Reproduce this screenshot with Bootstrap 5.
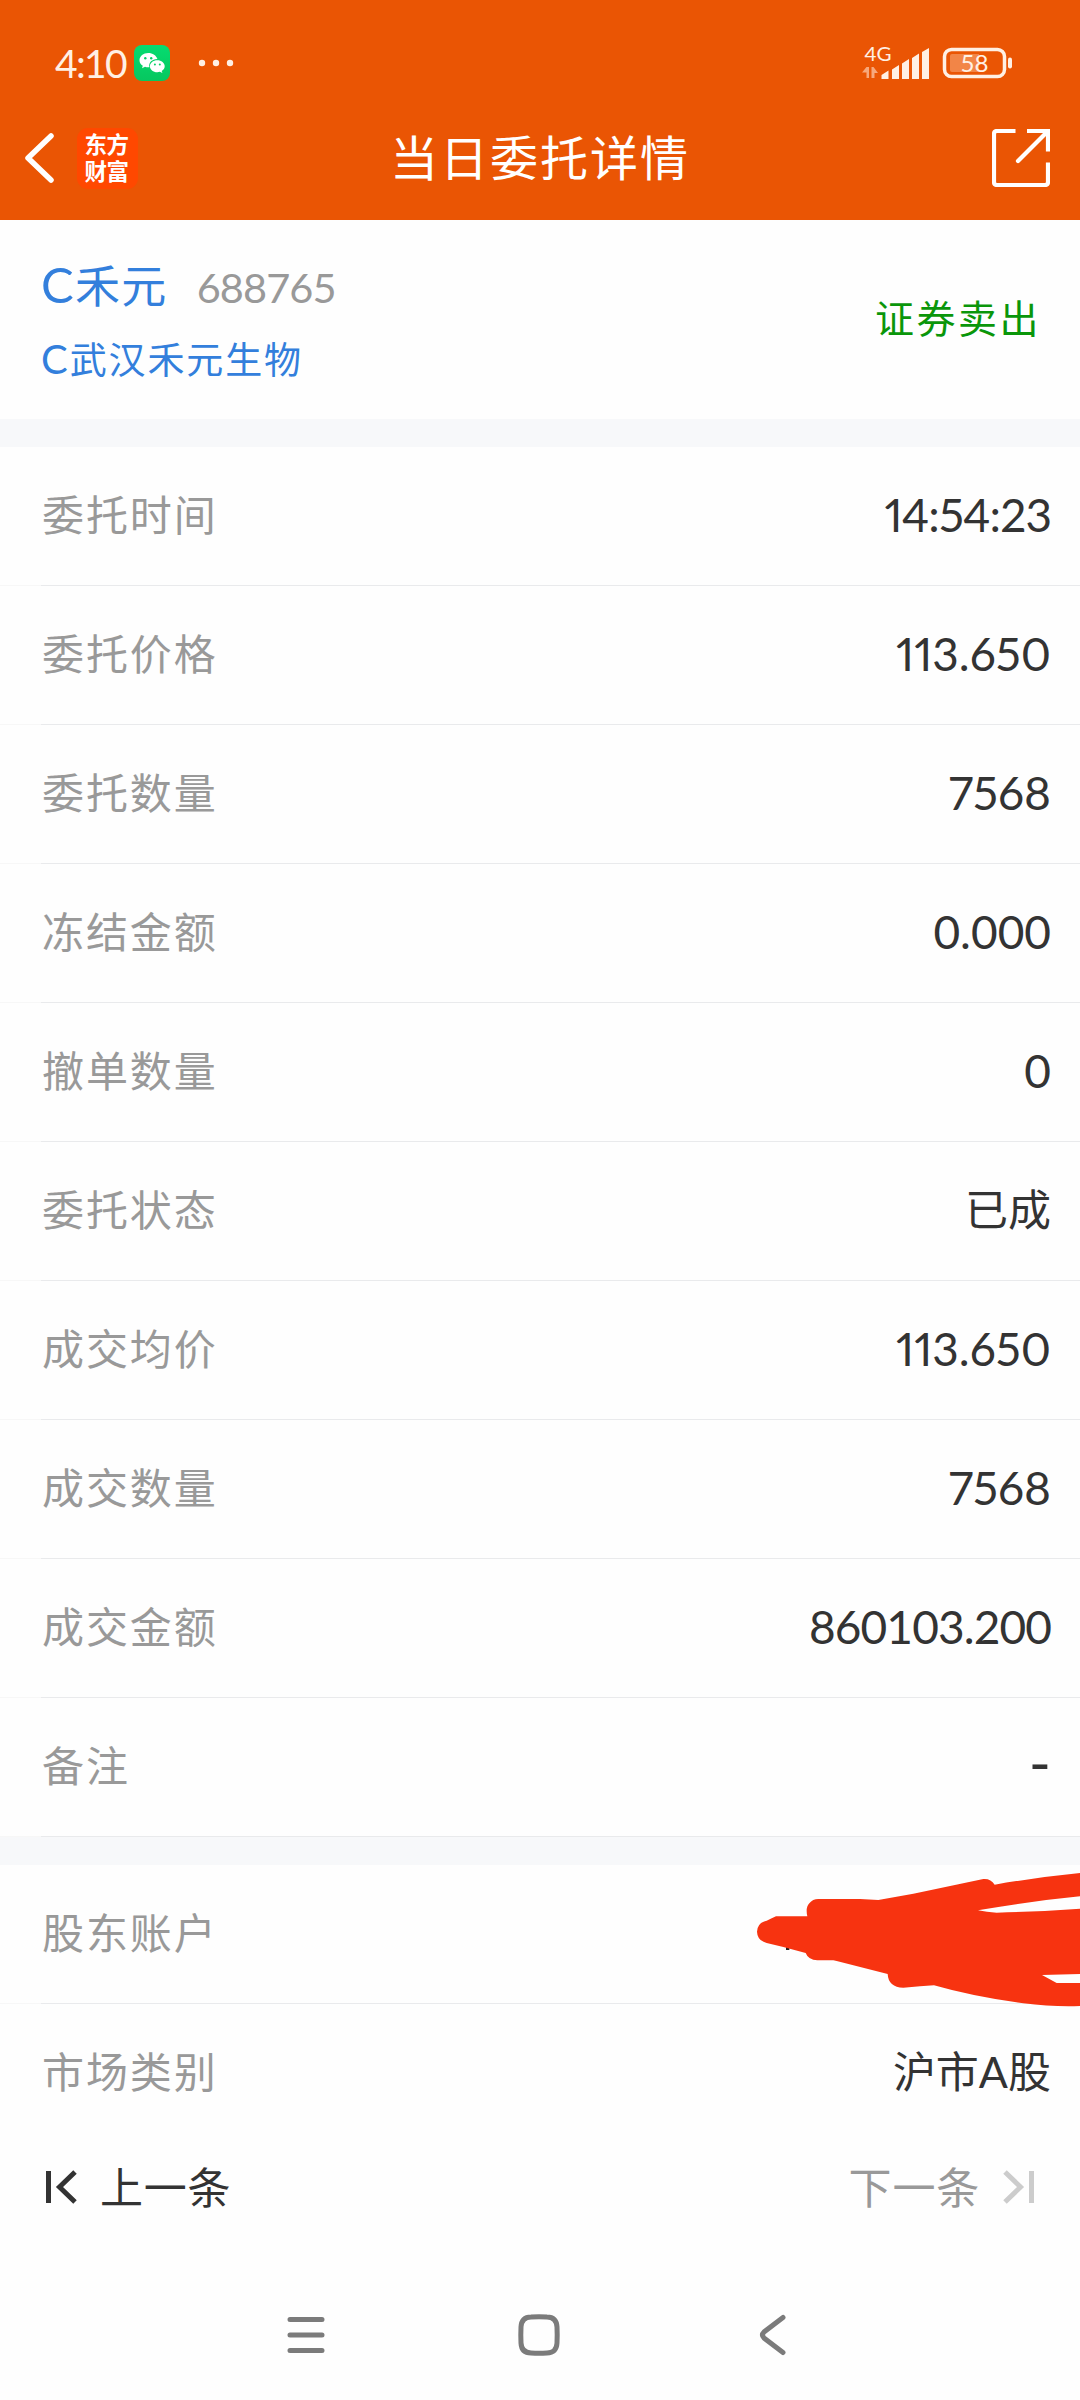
<!DOCTYPE html>
<html lang="zh-CN">
<head>
<meta charset="utf-8">
<meta name="viewport" content="width=device-width, initial-scale=1">
<title>当日委托详情</title>
<link href="https://cdn.jsdelivr.net/npm/bootstrap@5.3.0/dist/css/bootstrap.min.css" rel="stylesheet">
<style>
  body { font-family: Lato, "Noto Sans CJK SC", sans-serif; color: #333; background: #fefefe; width: 1080px; height: 2400px; overflow: hidden; line-height: 1; }
  svg { display: block; flex: none; }
  .top-bar { background: #ea5504; height: 220px; color: #fff; }
  .status-line { height: 96px; padding: 30px 67px 0 55px; color: #fff0e4; }
  .clock { font-size: 39px; width: 79px; letter-spacing: -1.7px; line-height: 66px; }
  .title-line { height: 124px; padding: 0 30px 0 25px; }
  .app-logo { width: 61px; height: 61px; border-radius: 11px; background: #ff4800; font: 700 22.500px/27px "Noto Sans CJK SC", sans-serif; margin-left: 23px; padding: 2px 2px 0 0; letter-spacing: -.4px; }
  .page-title { font-size: 48px; letter-spacing: 2px; }
  .stock { height: 199px; padding: 42px 39px 0 41px; }
  .blue { color: #337fdc; }
  .stock-name { font-size: 45px; line-height: 48px; letter-spacing: 1.300px; }
  .stock-name span { font-size: 49px; line-height: 40px; }
  .stock-code { font-size: 41.5px; color: #999; margin-left: 29px; letter-spacing: -.9px; }
  .stock-full { font-size: 37px; line-height: 40px; letter-spacing: 1.9px; margin-top: 30px; }
  .stock-full span { font-size: 40px; line-height: 36px; }
  .side { font-size: 39px; letter-spacing: 2.500px; color: #0a960a; padding-top: 37px; }
  .band { height: 28px; background: #f7f8fa; }
  .info-row { height: 139px; padding: 0 29px 4px 42px; position: relative; background: linear-gradient(90deg, #f7f7f7 41px, #e9eaec 41px) bottom / 100% 1px no-repeat; }
  .info-row.plain { background: none; }
  .info-label { font-size: 42px; letter-spacing: 1.9px; color: #999; }
  .info-value { font-size: 46px; font-feature-settings: "pnum"; }
  .info-value.tab { font-feature-settings: normal; }
  .info-value.tight { letter-spacing: -.9px; }
  .info-value.cn { font-size: 43px; }
  .info-value.none { font-size: 60px; padding-bottom: 8px; }
  .scribble { position: absolute; right: 0; top: 0; }
  .pager { height: 88px; padding: 0 44px 0 44px; font-size: 43px; letter-spacing: .8px; }
  .pager .gap-icon { gap: 22px; }
  .off { color: #999; }
  .sys-nav { height: 169px; padding: 39px 0 0 286px; }
  .home-key { margin: 0 199px 0 192px; }
</style>
<script src="https://cdn.jsdelivr.net/npm/bootstrap@5.3.0/dist/js/bootstrap.bundle.min.js"></script>
</head>
<body>
<header class="top-bar">
  <div class="status-line d-flex justify-content-between align-items-start">
    <div class="d-flex align-items-center">
      <span class="clock">4:10</span>
      <svg width="36" height="36" viewBox="0 0 36 36">
        <defs><linearGradient id="wx" x1="0" y1="0" x2="0" y2="1"><stop offset="0" stop-color="#06dc70"/><stop offset="1" stop-color="#06c75f"/></linearGradient></defs>
        <rect width="36" height="36" rx="8" fill="url(#wx)"/>
        <path fill="#fff" d="M14.2 8C9.400 8 5.500 11.200 5.500 15.200c0 2.300 1.300 4.300 3.300 5.600L8 23.300l3-1.500c1.500.5 3 .6 4.400.4-1.200-4.600 3.200-8.300 8-8.100C22.400 10.500 18.600 8 14.200 8z"/>
        <path fill="#fff" d="M23.300 15.200c-4.200 0-7.400 2.700-7.400 6s3.200 6 7.400 6c.9 0 1.800-.1 2.600-.4l2.500 1.300-.7-2.200c1.800-1.100 3-2.800 3-4.700 0-3.300-3.300-6-7.400-6z"/>
        <g fill="#06cf67"><circle cx="11.300" cy="13.200" r="1.200"/><circle cx="17.200" cy="13.200" r="1.200"/><circle cx="20.900" cy="19.400" r="1"/><circle cx="25.800" cy="19.400" r="1"/></g>
      </svg>
      <svg class="ms-4" width="44" height="36" viewBox="0 0 44 36" fill="#fff0e4"><circle cx="8" cy="18" r="3.200"/><circle cx="22" cy="18" r="3.200"/><circle cx="36" cy="18" r="3.200"/></svg>
    </div>
    <svg width="152" height="50" viewBox="861 35 152 50" fill="#fff0e4" style="margin-top:5px">
      <text x="864.500" y="61" font-size="20" textLength="27" lengthAdjust="spacingAndGlyphs" font-family="Lato, sans-serif">4G</text>
      <g fill="#f7a87c"><path d="M866.500 67h2.500v11h-2.500v-5.500h-4.500z"/><path d="M871.500 67h2l4.500 6h-3.500v5h-3z"/></g>
      <path d="M881.500 75l7-4.500v8.500h-7zM892 69.500l7-4.500v14h-7zM902 63.500l7-4.500v20h-7zM912 58l7-4.500v25.500h-7zM922 52l7-4v31h-7z"/>
      <path d="M952 54h27v18h-27q-2 0-2-2v-14q0-2 2-2z" fill="#f28547"/>
      <rect x="944.500" y="49.500" width="60" height="27" rx="7" fill="none" stroke="#fff0e4" stroke-width="3.500"/>
      <rect x="1008" y="57.500" width="4" height="11" rx="2"/>
      <text x="960.500" y="71.500" font-size="24" textLength="28" lengthAdjust="spacingAndGlyphs" font-family="Lato, sans-serif">58</text>
    </svg>
  </div>
  <div class="title-line d-flex align-items-center justify-content-between position-relative">
    <div class="d-flex align-items-center">
      <svg width="29" height="50" viewBox="0 0 29 50" fill="none" stroke="#fff" stroke-width="5.500" stroke-linecap="round" stroke-linejoin="round"><path d="M26 3 3 25 26 47"/></svg>
      <div class="app-logo text-center">东方<br>财富</div>
    </div>
    <h1 class="page-title position-absolute top-50 start-50 translate-middle m-0 fw-normal text-nowrap">当日委托详情</h1>
    <svg width="58" height="58" viewBox="0 0 58 58" fill="none" stroke="#fff" stroke-width="4.200"><path d="M23.500 2H5Q2 2 2 5v48q0 3 3 3h48q3 0 3-3V33.500M35 2h21v20.500" /><path d="M55 3 26 32" stroke-linecap="round"/></svg>
  </div>
</header>
<section class="stock d-flex justify-content-between">
  <div>
    <div class="d-flex align-items-baseline"><div class="stock-name blue"><span>C</span>禾元</div><span class="stock-code">688765</span></div>
    <div class="stock-full blue"><span>C</span>武汉禾元生物</div>
  </div>
  <div class="side">证券卖出</div>
</section>
<div class="band"></div>
<main>
  <div class="info-row d-flex justify-content-between align-items-center"><span class="info-label">委托时间</span><span class="info-value tight">14:54:23</span></div>
  <div class="info-row d-flex justify-content-between align-items-center"><span class="info-label">委托价格</span><span class="info-value">113.650</span></div>
  <div class="info-row d-flex justify-content-between align-items-center"><span class="info-label">委托数量</span><span class="info-value">7568</span></div>
  <div class="info-row d-flex justify-content-between align-items-center"><span class="info-label">冻结金额</span><span class="info-value tab">0.000</span></div>
  <div class="info-row d-flex justify-content-between align-items-center"><span class="info-label">撤单数量</span><span class="info-value tab">0</span></div>
  <div class="info-row d-flex justify-content-between align-items-center"><span class="info-label">委托状态</span><span class="info-value cn">已成</span></div>
  <div class="info-row d-flex justify-content-between align-items-center"><span class="info-label">成交均价</span><span class="info-value">113.650</span></div>
  <div class="info-row d-flex justify-content-between align-items-center"><span class="info-label">成交数量</span><span class="info-value">7568</span></div>
  <div class="info-row d-flex justify-content-between align-items-center"><span class="info-label">成交金额</span><span class="info-value tab tight">860103.200</span></div>
  <div class="info-row d-flex justify-content-between align-items-center"><span class="info-label">备注</span><span class="info-value none">-</span></div>
  <div class="band"></div>
  <div class="info-row d-flex justify-content-between align-items-center">
    <span class="info-label">股东账户</span>
    <svg class="scribble" width="340" height="150" viewBox="0 135 1020 450">
      <rect x="138" y="380" width="10" height="10" fill="#222"/>
      <path fill="#f73310" d="M80 302L92 296 108 289H202Q196 262 208 250 218 237 235 237H360L415 240 520 221 730 177Q752 175 764 194Q890 172 1020 159V229Q860 245 714 271 740 277 770 278 900 275 1020 266V462L906 465 950 489H1020V558Q940 561 850 550 700 530 582 496L540 499 490 503Q445 502 443 462L290 423 280 421H232Q205 420 197 399L130 381 80 369Q52 362 51 335 52 308 80 302z"/>
    </svg>
  </div>
  <div class="info-row plain d-flex justify-content-between align-items-center"><span class="info-label">市场类别</span><span class="info-value cn">沪市A股</span></div>
</main>
<footer>
  <div class="pager d-flex justify-content-between align-items-center">
    <div class="d-flex align-items-center gap-icon"><svg width="34" height="34" viewBox="0 0 34 34" fill="none" stroke="#333" stroke-width="5"><path d="M4.500 1v32M31 2 15.500 17 31 32"/></svg>上一条</div>
    <div class="d-flex align-items-center gap-icon off">下一条<svg width="34" height="34" viewBox="0 0 34 34" fill="none" stroke="#ccc" stroke-width="5"><path d="M29.500 1v32M3 2 18.500 17 3 32"/></svg></div>
  </div>
  <div class="sys-nav d-flex align-items-center">
    <svg width="40" height="42" viewBox="0 0 40 42" stroke="#7b7b7b" stroke-width="5" stroke-linecap="round"><path d="M4 5.500h32M4 21h32M4 36.500h32"/></svg>
    <svg class="home-key" width="42" height="42" viewBox="0 0 42 42" fill="none" stroke="#7b7b7b" stroke-width="5"><path d="M13 3Q21 2.600 29 3 38.500 3.200 39 13 39.400 21 39 29 38.500 38.800 29 39 21 39.400 13 39 3.500 38.800 3 29 2.600 21 3 13 3.500 3.200 13 3z"/></svg>
    <svg width="27" height="42" viewBox="0 0 27 42" fill="none" stroke="#7b7b7b" stroke-width="5" stroke-linecap="round"><path d="M24 3.500 5 18Q2 21 5 24L24 38.500"/></svg>
  </div>
</footer>
</body>
</html>
